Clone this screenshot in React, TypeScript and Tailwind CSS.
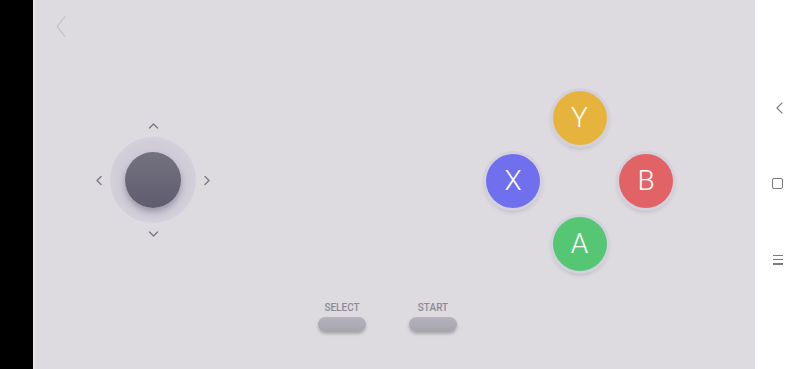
import React from "react";

const Chevron = ({ dir, className }: { dir: "up" | "down" | "left" | "right"; className?: string }) => {
  const paths: Record<string, string> = {
    up: "M1 6 L5 2 L9 6",
    down: "M1 2 L5 6 L9 2",
    left: "M6 1 L2 5 L6 9",
    right: "M2 1 L6 5 L2 9",
  };
  const vb = dir === "up" || dir === "down" ? "0 0 10 8" : "0 0 8 10";
  return (
    <svg viewBox={vb} className={className} fill="none" stroke="currentColor" strokeWidth={1.4} strokeLinecap="round" strokeLinejoin="round">
      <path d={paths[dir]} />
    </svg>
  );
};

const FaceButton = ({ label, color }: { label: string; color: string }) => (
  <div
    className={`w-[54px] h-[54px] rounded-full flex items-center justify-center text-white text-[28px] shadow-[0_0_0_3px_#d3d1dc,0_3px_5px_rgba(90,85,110,0.35)] ${color}`}
    style={{ fontFamily: "Roboto, 'Liberation Sans', sans-serif", fontWeight: 300 }}
  >
    {label}
  </div>
);

export default function App() {
  return (
    <div className="w-[800px] h-[369px] flex overflow-hidden" style={{ fontFamily: "Roboto, 'Liberation Sans', sans-serif" }}>
      <div className="w-[33px] h-full bg-black" />
      <div className="w-[2px] h-full bg-[#e6e5e8]" />
      <div className="relative flex-1 h-full bg-[#dddbdf]">
        {/* top-left back */}
        <svg viewBox="0 0 12 22" className="absolute left-[20px] top-[16px] w-[12px] h-[21px] text-[#c5c3c9]" fill="none" stroke="currentColor" strokeWidth={1.3} strokeLinecap="round" strokeLinejoin="round">
          <path d="M10 1 L2 11 L10 21" />
        </svg>

        {/* joystick */}
        <div className="absolute left-[53px] top-[115px] grid grid-cols-[22px_86px_22px] grid-rows-[22px_86px_22px] text-[#7b7989]">
          <div />
          <div className="flex items-center justify-center">
            <Chevron dir="up" className="w-[11px] h-[8px]" />
          </div>
          <div />
          <div className="flex items-center justify-center">
            <Chevron dir="left" className="w-[8px] h-[11px]" />
          </div>
          <div className="w-[86px] h-[86px] rounded-full flex items-center justify-center bg-[radial-gradient(circle,#cbc6d3_0%,#d1cdd8_60%,#d8d5de_85%,#dcdadf_100%)]">
            <div className="w-[56px] h-[56px] rounded-full bg-[linear-gradient(180deg,#74717f_0%,#6a6778_50%,#5f5c6d_100%)] shadow-[0_4px_6px_rgba(60,55,80,0.35)]" />
          </div>
          <div className="flex items-center justify-center">
            <Chevron dir="right" className="w-[8px] h-[11px]" />
          </div>
          <div />
          <div className="flex items-center justify-center">
            <Chevron dir="down" className="w-[11px] h-[8px]" />
          </div>
          <div />
        </div>

        {/* face buttons */}
        <div className="absolute left-[445px] top-[86px] grid grid-cols-[66px_67px_66px] grid-rows-[63px_63px_63px]">
          <div />
          <div className="flex items-center justify-center"><FaceButton label="Y" color="bg-[#e6b43d]" /></div>
          <div />
          <div className="flex items-center justify-center"><FaceButton label="X" color="bg-[#7070ee]" /></div>
          <div />
          <div className="flex items-center justify-center"><FaceButton label="B" color="bg-[#e16365]" /></div>
          <div />
          <div className="flex items-center justify-center"><FaceButton label="A" color="bg-[#55c774]" /></div>
          <div />
        </div>

        {/* select / start */}
        <div className="absolute left-[283px] top-[302px] flex gap-[43px]">
          {["SELECT", "START"].map((t) => (
            <div key={t} className="flex flex-col items-center w-[48px]">
              <span className="text-[10px] leading-[12px] text-[#8c8a97]" style={{ fontFamily: "Roboto, 'Liberation Sans', sans-serif", fontWeight: 500 }}>{t}</span>
              <div className="mt-[3px] w-[48px] h-[15px] rounded-full bg-[linear-gradient(180deg,#b4b3bb_0%,#a6a5ae_100%)] shadow-[0_2px_3px_rgba(80,78,95,0.35)]" />
            </div>
          ))}
        </div>
      </div>

      {/* nav bar */}
      <div className="w-[45px] h-full bg-white flex flex-col items-center text-[#7a7a7a]">
        <div className="mt-[102px] pl-[3px]">
          <svg viewBox="0 0 8 14" className="w-[7px] h-[12px]" fill="none" stroke="currentColor" strokeWidth={1.3} strokeLinecap="round" strokeLinejoin="round">
            <path d="M7 1 L1 7 L7 13" />
          </svg>
        </div>
        <div className="mt-[64px] w-[11px] h-[11px] rounded-[2px] border-[1.3px] border-[#7a7a7a]" />
        <div className="mt-[66px] flex flex-col gap-[3px] pl-[1px]">
          <div className="w-[10px] h-[1.2px] bg-[#7a7a7a]" />
          <div className="w-[10px] h-[1.2px] bg-[#7a7a7a]" />
          <div className="w-[10px] h-[1.2px] bg-[#7a7a7a]" />
        </div>
      </div>
    </div>
  );
}
